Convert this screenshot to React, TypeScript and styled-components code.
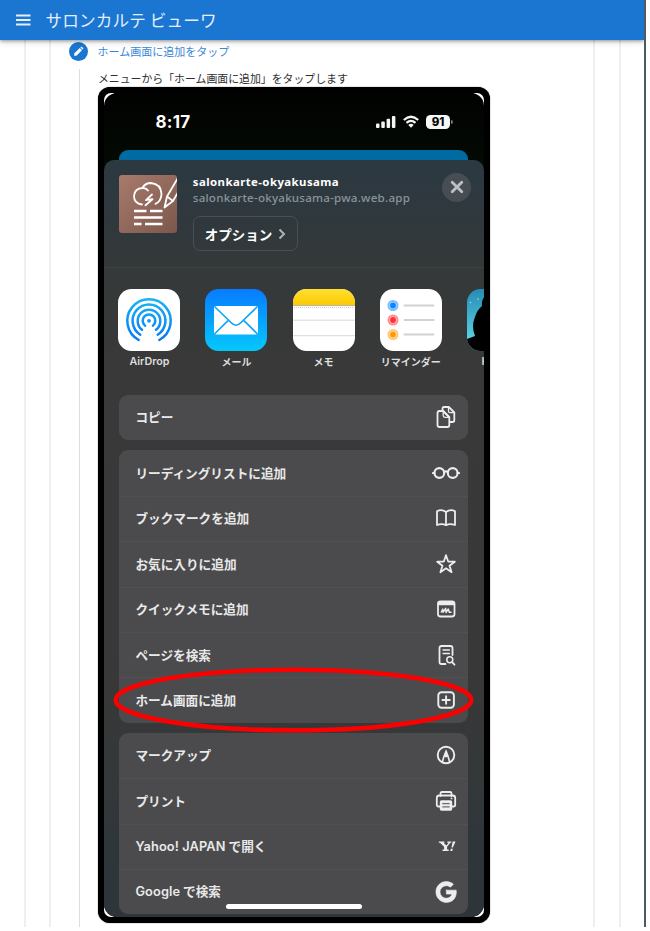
import React from 'react';
import styled, { createGlobalStyle } from 'styled-components';

const Global = createGlobalStyle`
  * { box-sizing: border-box; }
  html, body { margin: 0; padding: 0; background: #fff; }
  body { width: 650px; height: 931px; overflow: hidden; font-family: "Noto Sans CJK JP", sans-serif; }
  svg { display: block; flex: none; }
`;

const Page = styled.div`
  width: 646px;
  height: 927px;
  overflow: hidden;
  display: flex;
  flex-direction: column;
  background: #fff;
  border-right: 2px solid #4c5a63;
`;
const AppBar = styled.header`
  height: 39.5px;
  flex: none;
  display: flex;
  align-items: center;
  gap: 15px;
  padding-left: 15.5px;
  background: #1b76d2;
  color: #e4effa;
  z-index: 1;
  box-shadow: 0 1px 3px rgba(0, 0, 0, 0.3), 0 2px 6px rgba(0, 0, 0, 0.18);
`;
const AppTitle = styled.h1`
  margin: 0;
  font-size: 16.6px;
  line-height: 24px;
  font-weight: 400;
  letter-spacing: 0.15px;
  white-space: nowrap;
`;
const OuterCard = styled.main`
  flex: 1;
  min-height: 0;
  margin: 0 23px 0 24px;
  padding: 0 24px 0 23px;
  border: solid #efefef;
  border-width: 0 2px;
  display: flex;
`;
const InnerCard = styled.section`
  flex: 1;
  border: solid #efefef;
  border-width: 0 2px;
  padding-left: 17.5px;
`;
const StepHeader = styled.div`
  display: flex;
  align-items: center;
  gap: 10px;
  padding-top: 2px;
  height: 22px;
`;
const StepBadge = styled.span`
  width: 19px;
  height: 19px;
  border-radius: 50%;
  background: #1b76d2;
  display: grid;
  place-items: center;
`;
const StepLabel = styled.span`
  color: #3b88d6;
  font-size: 11px;
  line-height: 18px;
  margin-top: -2px;
  white-space: nowrap;
`;
const StepBody = styled.div`
  margin: 7px 0 0 10px;
  border-left: 1px solid #dedede;
  padding-left: 18.5px;
  height: 870px;
`;
const Description = styled.p`
  margin: 0;
  height: 18.5px;
  font-size: 10.88px;
  line-height: 19px;
  color: #2e2e2e;
  white-space: nowrap;
`;
const Phone = styled.div`
  width: 392.4px;
  height: 836px;
  padding: 6px;
  border-radius: 12px;
  background: #000;
  box-shadow: 0 0 1px #000;
`;
const Corners = styled.div`
  height: 824px;
  background: linear-gradient(90deg, #fff 10px, #000 10px, #000 370px, #fff 370px);
  border-radius: 7px;
  overflow: hidden;
`;
const Screen = styled.div`
  height: 824px;
  border-radius: 13px;
  overflow: hidden;
  background: linear-gradient(#010201, #030903 67px);
  color: #f1f1f1;
  position: relative;
`;
const StatusBar = styled.div`
  height: 57px;
  display: flex;
  align-items: center;
  padding: 0 34.4px 0 51.5px;
`;
const Clock = styled.span`
  font: 700 17px/20px Inter, sans-serif;
  letter-spacing: 0.2px;
  color: #fff;
  flex: 1;
`;
const StatusIcons = styled.div`
  display: flex;
  align-items: center;
  gap: 7px;
`;
const Battery = styled.span`
  width: 24px;
  height: 14px;
  border-radius: 4.5px;
  background: #f7f7f7;
  color: #080808;
  font: 800 11.5px/14px Inter, sans-serif;
  text-align: center;
  position: relative;
  &::after {
    content: '';
    position: absolute;
    left: 25px;
    top: 5px;
    width: 2px;
    height: 4px;
    border-radius: 0 2px 2px 0;
    background: #777;
  }
`;
const BehindPage = styled.div`
  height: 10px;
  margin: 0 16px 0 15.4px;
  border-radius: 9px 9px 0 0;
  background: #006ba3;
`;
const Sheet = styled.div`
  height: 757px;
  border-radius: 10px 10px 0 0;
  background: linear-gradient(#2b3941, #30383d 60px, #353939 110px, #383938 200px, #383838 520px, #343839 610px, #2f363a 680px, #2e353a);
`;
const ShareHeader = styled.div`
  height: 107.5px;
  display: flex;
  padding: 15.4px 13.4px 0 15.4px;
  border-bottom: 1px solid #3d4243;
`;
const ShareInfo = styled.div`
  flex: 1;
  margin: -1px 0 0 15.4px;
  display: flex;
  flex-direction: column;
  align-items: flex-start;
  white-space: nowrap;
`;
const SiteName = styled.strong`
  font: 700 11.4px/15px "Noto Sans", sans-serif;
  letter-spacing: 0.43px;
  color: #fff;
  height: 16px;
`;
const SiteUrl = styled.span`
  font: 500 11.6px/16px "Noto Sans", sans-serif;
  letter-spacing: 0.23px;
  color: #89949b;
`;
const OptionsButton = styled.button`
  margin: 10px 0 0;
  padding: 0 11px 0 11px;
  width: 105px;
  height: 35px;
  border: 1px solid #475056;
  border-radius: 7px;
  background: transparent;
  color: #fff;
  font: 700 13.5px/20px "Noto Sans CJK JP", sans-serif;
  display: flex;
  align-items: center;
  justify-content: space-between;
`;
const CloseButton = styled.button`
  width: 29px;
  height: 29px;
  margin-top: -2.5px;
  padding: 0;
  border: 0;
  border-radius: 50%;
  background: #464e54;
  display: grid;
  place-items: center;
`;
const AppsRow = styled.div`
  height: 127.5px;
  padding: 21.5px 0 0 14.4px;
  display: flex;
  gap: 25.1px;
  overflow: hidden;
`;
const AppItem = styled.div`
  flex: none;
  width: 62px;
  display: flex;
  flex-direction: column;
  align-items: center;
`;
const AppLabel = styled.span<{ $latin?: boolean }>`
  margin-top: 3px;
  font-family: ${p => (p.$latin ? 'Inter' : '"Noto Sans CJK JP"')}, sans-serif;
  font-size: ${p => (p.$latin ? 10.7 : 10)}px;
  font-weight: ${p => (p.$latin ? 600 : 700)};
  line-height: 15px;
  color: #dedede;
  white-space: nowrap;
`;
const ActionGroup = styled.div`
  width: 349px;
  margin: 0 0 10px 15.4px;
  border-radius: 9px;
  background: #4b4b4d;
  overflow: hidden;
`;
const ActionRow = styled.div`
  height: 45.4px;
  padding: 0 6px 1px 16px;
  display: flex;
  align-items: center;
  justify-content: space-between;
  & + & { border-top: 1px solid #515153; }
`;
const ActionLabel = styled.span`
  font: 700 12.65px/20px "Noto Sans CJK JP", sans-serif;
  color: #e9e9e9;
  white-space: nowrap;
`;
const Latin = styled.span`
  font: 600 12.8px/20px Inter, sans-serif;
  letter-spacing: 0.12px;
`;
const IconSlot = styled.span`
  width: 32px;
  display: grid;
  place-items: center;
`;
const HomeIndicator = styled.div`
  position: absolute;
  left: 122.4px;
  top: 811px;
  width: 136px;
  height: 5px;
  border-radius: 3px;
  background: #fff;
`;
const Highlight = styled.div`
  position: absolute;
  left: 15.4px;
  top: 580px;
  width: 361px;
  height: 66px;
`;
const PhoneFrame = styled.div`
  position: relative;
  width: 392.4px;
`;

type IconName = 'copy' | 'glasses' | 'book' | 'star' | 'memo' | 'search' | 'add' | 'markup' | 'print' | 'yahoo' | 'google';

const drawings: Record<IconName, React.ReactNode> = {
  copy: <>
    <path d="M10.500 7V5.700Q10.500 4 12 4h4.800l5.500 5.500V17.300Q22.300 19 20.500 19H18" />
    <path d="M16.500 4.200V8Q16.500 9.700 18 9.700H22.300M11 8.300L16.800 14" strokeWidth="1.3" />
    <path d="M7.500 8h3.800l6 6V22Q17.300 24 15.300 24H7.500Q5.500 24 5.500 22V10Q5.500 8 7.500 8Z" />
    <path d="M11.200 8.200V12.500Q11.200 14.300 13 14.300H17" strokeWidth="1.3" />
  </>,
  glasses: <>
    <circle cx="7.300" cy="14" r="4.900" strokeWidth="2.1" /><circle cx="20.700" cy="14" r="4.900" strokeWidth="2.1" />
    <path d="M12.200 13Q14 11.700 15.800 13M1 14H2.500M25.500 14H27" strokeWidth="2.1" />
  </>,
  book: <path d="M14 8Q9.500 4.500 5 7.300V21Q10 19 14 21.200Q18 19 23 21V7.300Q18.500 4.500 14 8ZM14 8V21" />,
  star: <path d="M14 5.200L16.200 11.500L22.800 11.700L17.500 15.700L19.600 22.200L14 18.300L8.400 22.200L10.500 15.700L5.200 11.700L11.800 11.500Z" />,
  memo: <>
    <rect x="6" y="6.500" width="16.500" height="15" rx="2.500" />
    <path d="M7.200 8.500H21.300" strokeWidth="3.600" />
    <path d="M9.300 17L10.800 14L11 17.300L13.700 13.300L14 17.500L16.300 14L17.300 17.300H19" strokeWidth="1.400" />
  </>,
  search: <>
    <path d="M13.500 23H9.500Q7.500 23 7.500 21V7Q7.500 5 9.500 5H18.500Q20.500 5 20.500 7V14" />
    <path d="M11 9H17.500M11 12.500H17.500" strokeWidth="1.3" />
    <circle cx="17.800" cy="18.800" r="3" strokeWidth="1.5" /><path d="M20 21L22.500 23.700" />
  </>,
  add: <><rect x="6.300" y="6.300" width="15.600" height="15.400" rx="3.200" strokeWidth="1.900" /><path d="M14.100 10.300V17.700M10.400 14H17.800" strokeWidth="1.900" /></>,
  markup: <>
    <circle cx="14" cy="14" r="8.300" strokeWidth="1.9" /><path d="M10.500 20.500Q11.500 16 14 10.500Q16.500 16 17.500 20.500" strokeWidth="1.600" />
    <path d="M14 9L12 15Q14 17.500 16 15Z" fill="currentColor" strokeWidth=".5" />
  </>,
  print: <>
    <path d="M8.500 9V6.500Q8.500 5 10 5H18Q19.500 5 19.500 6.500V9" />
    <path d="M8.500 19.500H6.500Q4.800 19.500 4.800 17.700V11Q4.800 8.500 7.300 8.500H20.700Q23.200 8.500 23.200 11V17.700Q23.200 19.500 21.500 19.500H19.500" />
    <rect x="8.500" y="14" width="11" height="9" rx="1" fill="currentColor" strokeWidth="1.4" />
    <path d="M10.700 16.700H17.300M10.700 19.900H17.300" stroke="#4b4b4d" strokeWidth="1" /><circle cx="19.500" cy="11.400" r=".9" fill="currentColor" stroke="none" />
  </>,
  yahoo: <>
    <path d="M6.800 9.500H12.500V10.700H11.500L14.400 13.600L16.600 10.700H15.300V9.500H19.300V10.700H18.300L15.100 14.800V17.600H16.700V18.900H10.500V17.600H12.100V14.800L8 10.700H6.800Z" fill="currentColor" stroke="none" />
    <path d="M20.700 9.500H23.500L20.900 15.500H19.500ZM18.900 16.800H20.900L20.200 18.900H18.200Z" fill="currentColor" stroke="none" />
  </>,
  google: <path transform="translate(1.300 1.500) scale(1.040)" d="M12.545 10.239v3.821h5.445c-.712 2.315-2.647 3.972-5.445 3.972a6.033 6.033 0 1 1 0-12.064c1.498 0 2.866.549 3.921 1.453l2.814-2.814C17.503 2.988 15.139 2 12.545 2 7.021 2 2.543 6.477 2.543 12s4.478 10 10.002 10c8.396 0 10.249-7.850 9.426-11.748L12.545 10.239Z" fill="currentColor" strokeWidth=".6" />,
};

const ActionIcon = ({ name }: { name: IconName }) => (
  <IconSlot>
    <svg width="28" height="28" viewBox="0 0 28 28" fill="none" color="#ededed" stroke="currentColor" strokeWidth="1.8" strokeLinecap="round" strokeLinejoin="round">{drawings[name]}</svg>
  </IconSlot>
);

const AirDropIcon = () => (
  <svg width="62" height="62" viewBox="0 0 62 62" fill="none">
    <defs><linearGradient id="air" x1="0" y1="9" x2="0" y2="52" gradientUnits="userSpaceOnUse"><stop stopColor="#18b5f5" /><stop offset="1" stopColor="#0878fa" /></linearGradient></defs>
    <rect width="62" height="62" rx="13.500" fill="#fff" />
    <g stroke="url(#air)" strokeWidth="2.500" strokeLinecap="round">
      <path d="M20.700 51A21.700 21.700 0 1 1 41.300 51" /><path d="M22.300 45.700A16.400 16.400 0 1 1 39.700 45.700" />
      <path d="M24 40.800A11.300 11.300 0 1 1 38 40.800" /><path d="M27 36.600A6.300 6.300 0 1 1 35 36.600" />
    </g>
    <circle cx="31" cy="31.800" r="1.900" fill="#109bf5" />
  </svg>
);
const MailIcon = () => (
  <svg width="62" height="62" viewBox="0 0 62 62" fill="none">
    <defs><linearGradient id="mail" x1="0" y1="0" x2="0" y2="1"><stop stopColor="#087bff" /><stop offset="1" stopColor="#05c8fc" /></linearGradient></defs>
    <rect width="62" height="62" rx="13.500" fill="url(#mail)" />
    <rect x="9" y="17" width="44" height="28.500" rx="2" fill="#fff" />
    <path d="M9.500 17.500L26 33.500Q31 39 36 33.500L52.500 17.500M9.500 45L23.500 31.200M52.500 45L38.500 31.200" stroke="#12a5f8" strokeWidth="1.700" />
  </svg>
);
const NotesIcon = () => (
  <svg width="62" height="62" viewBox="0 0 62 62">
    <defs><clipPath id="notes"><rect width="62" height="62" rx="13.500" /></clipPath><linearGradient id="yellow" x1="0" y1="0" x2="0" y2="1"><stop stopColor="#ffdf33" /><stop offset="1" stopColor="#fcca00" /></linearGradient></defs>
    <g clipPath="url(#notes)"><path fill="#fff" d="M0 0h62v62H0z" /><path fill="url(#yellow)" d="M0 0h62v16H0z" /><path d="M0 16.500h62" stroke="#b8b3aa" /><path d="M1 18.500h60" stroke="#ccc" strokeDasharray="1 1" /><path d="M0 31.200h62M0 46.700h62" stroke="#d8d8d8" /></g>
  </svg>
);
const RemindersIcon = () => (
  <svg width="62" height="62" viewBox="0 0 62 62">
    <rect width="62" height="62" rx="13.500" fill="#fff" />
    {[['#0b86ff', 16.5], ['#ff3037', 31], ['#ff9b0a', 45.5]].map(([color, y]) => (
      <g key={color} fill={color as string}><circle cx="13" cy={y} r="5.500" opacity=".55" /><circle cx="13" cy={y} r="3.600" fill="#fff" opacity=".5" /><circle cx="13" cy={y} r="2.900" /><rect x="23.500" y={Number(y) - 1} width="31" height="2" rx="1" fill="#d2d2d3" /></g>
    ))}
  </svg>
);
const KindleIcon = () => (
  <svg width="62" height="62" viewBox="0 0 62 62">
    <defs><clipPath id="kindle"><rect width="62" height="62" rx="13.500" /></clipPath><linearGradient id="sky" x1="0" y1="0" x2="0" y2="1"><stop stopColor="#278bb4" /><stop offset="1" stopColor="#65e1ee" /></linearGradient></defs>
    <g clipPath="url(#kindle)"><path fill="url(#sky)" d="M0 0h62v62H0z" /><path d="M0 50L8 47Q4 37 8 28Q10 21 15 17Q14 9 20 6H62V62H0Z" fill="#000" /><circle cx="3.500" cy="13.500" r=".8" fill="#a6ddeb" /><circle cx="11" cy="10" r=".8" fill="#a6ddeb" /></g>
  </svg>
);
const SalonIcon = () => (
  <svg width="58" height="58" viewBox="0 0 58 58" fill="none">
    <defs><linearGradient id="salon" x1="0" y1="0" x2="1" y2="1"><stop stopColor="#a77b6c" /><stop offset="1" stopColor="#7d574c" /></linearGradient><clipPath id="tile"><rect width="58" height="58" rx="3" /></clipPath></defs>
    <g clipPath="url(#tile)" stroke="#fff" strokeWidth="1.800" strokeLinecap="round" strokeLinejoin="round">
      <path d="M0 0h58v58H0z" fill="url(#salon)" stroke="none" />
      <path d="M23 29.500Q15 28.500 15 21Q15.500 13.500 23.500 13Q26 8 32 8Q42 9 42.500 19Q42 26.500 36.500 28.800M23.500 13Q27 12.800 29 15.500" />
      <path d="M33 19.500L27 25.200L33.500 24.200L26.500 30.300" />
      <path d="M60 1L48 21.500L45.500 32.500L54 26L66 5M48 21.500L54 26M46 31.500L48.500 30" />
      <path d="M15 36H27.500M31 36H43.500M15 42.500H43.500M15 49H22.500M26 49H43.500" strokeWidth="2.400" strokeLinecap="butt" />
    </g>
  </svg>
);

const middleActions: [string, IconName][] = [
  ['リーディングリストに追加', 'glasses'], ['ブックマークを追加', 'book'], ['お気に入りに追加', 'star'],
  ['クイックメモに追加', 'memo'], ['ページを検索', 'search'], ['ホーム画面に追加', 'add'],
];
const lastActions: [React.ReactNode, IconName][] = [
  ['マークアップ', 'markup'], ['プリント', 'print'],
  [<><Latin>Yahoo! JAPAN</Latin> で開く</>, 'yahoo'], [<><Latin>Google</Latin> で検索</>, 'google'],
];
const Group = ({ items }: { items: [React.ReactNode, IconName][] }) => (
  <ActionGroup>
    {items.map(([label, icon]) => <ActionRow key={icon}><ActionLabel>{label}</ActionLabel><ActionIcon name={icon} /></ActionRow>)}
  </ActionGroup>
);

export default function App() {
  return (
    <>
      <Global />
      <Page>
        <AppBar>
          <svg width="15" height="12" viewBox="0 0 15 12"><path d="M0 1.500h14.500M0 6h14.500M0 10.500h14.500" stroke="#e4effa" strokeWidth="1.800" /></svg>
          <AppTitle>サロンカルテ ビューワ</AppTitle>
        </AppBar>
        <OuterCard>
          <InnerCard>
            <StepHeader>
              <StepBadge><svg width="11" height="11" viewBox="0 0 11 11"><path d="M1.200 9.800V7.600L6.800 2L9 4.200L3.400 9.800ZM7.400 1.400L8.100.8Q8.500.5 9 .9L10.100 2Q10.500 2.500 10.100 3L9.600 3.500Z" fill="#fff" /></svg></StepBadge>
              <StepLabel>ホーム画面に追加をタップ</StepLabel>
            </StepHeader>
            <StepBody>
              <Description>メニューから「ホーム画面に追加」をタップします</Description>
              <PhoneFrame>
                <Phone>
                  <Corners>
                    <Screen>
                      <StatusBar>
                        <Clock>8:17</Clock>
                        <StatusIcons>
                          <svg width="20" height="14" viewBox="0 0 20 14" fill="#f5f5f5"><rect y="8.500" width="3.500" height="4.500" rx="1" /><rect x="5.300" y="6.500" width="3.500" height="6.500" rx="1" /><rect x="10.600" y="3.700" width="3.500" height="9.300" rx="1" /><rect x="15.900" y="1" width="3.500" height="12" rx="1" /></svg>
                          <svg width="16" height="14" viewBox="0 0 16 14" fill="none" stroke="#f5f5f5" strokeWidth="2.200"><path d="M.8 5Q8-1.500 15.200 5M3.500 7.900Q8 3.800 12.500 7.900" /><path d="M5.300 10Q8 7.500 10.700 10L8 12.800Z" fill="#f5f5f5" stroke="none" /></svg>
                          <Battery>91</Battery>
                        </StatusIcons>
                      </StatusBar>
                      <BehindPage />
                      <Sheet>
                        <ShareHeader>
                          <SalonIcon />
                          <ShareInfo>
                            <SiteName>salonkarte-okyakusama</SiteName>
                            <SiteUrl>salonkarte-okyakusama-pwa.web.app</SiteUrl>
                            <OptionsButton>オプション<svg width="8" height="12" viewBox="0 0 8 12" fill="none" stroke="#aeb3b5" strokeWidth="2"><path d="M1.500 1.500L6 6L1.500 10.500" /></svg></OptionsButton>
                          </ShareInfo>
                          <CloseButton aria-label="閉じる"><svg width="14" height="14" viewBox="0 0 14 14" stroke="#bcc0c4" strokeWidth="2.800" strokeLinecap="round"><path d="M2.200 2.200l9.600 9.600M11.800 2.200L2.200 11.800" /></svg></CloseButton>
                        </ShareHeader>
                        <AppsRow>
                          <AppItem><AirDropIcon /><AppLabel $latin>AirDrop</AppLabel></AppItem>
                          <AppItem><MailIcon /><AppLabel>メール</AppLabel></AppItem>
                          <AppItem><NotesIcon /><AppLabel>メモ</AppLabel></AppItem>
                          <AppItem><RemindersIcon /><AppLabel>リマインダー</AppLabel></AppItem>
                          <AppItem><KindleIcon /><AppLabel $latin>Kindle</AppLabel></AppItem>
                        </AppsRow>
                        <Group items={[['コピー', 'copy']]} />
                        <Group items={middleActions} />
                        <Group items={lastActions} />
                      </Sheet>
                      <HomeIndicator />
                    </Screen>
                  </Corners>
                </Phone>
                <Highlight><svg width="361" height="66" viewBox="0 0 361 66"><ellipse cx="180.500" cy="33" rx="177.800" ry="30.300" fill="none" stroke="#fb0000" strokeWidth="4.600" /></svg></Highlight>
              </PhoneFrame>
            </StepBody>
          </InnerCard>
        </OuterCard>
      </Page>
    </>
  );
}
